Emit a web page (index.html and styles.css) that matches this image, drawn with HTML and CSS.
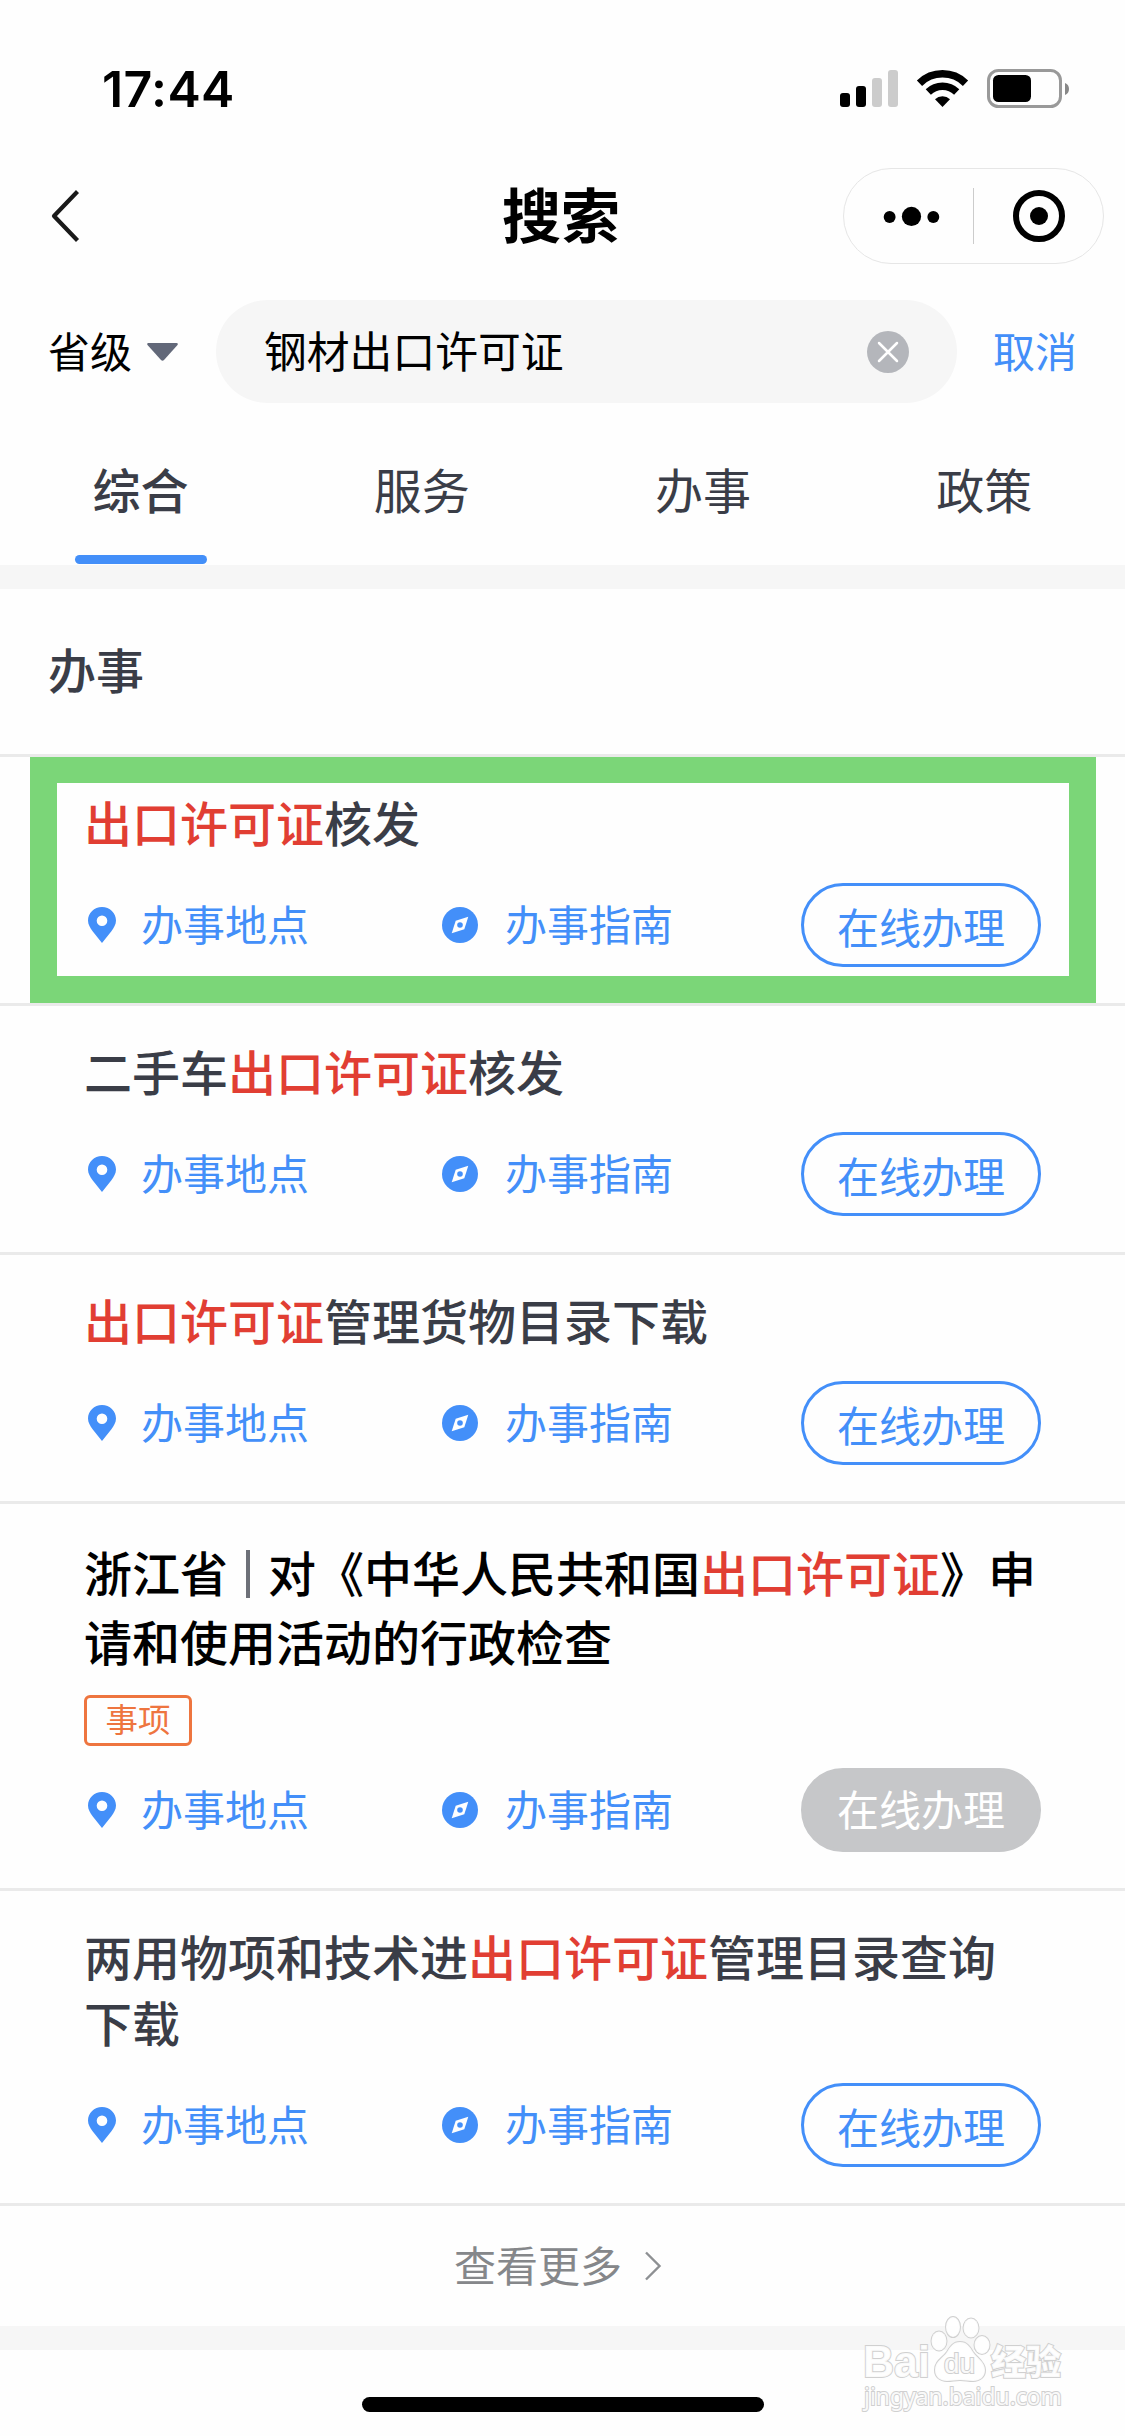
FILE: index.html
```html
<!DOCTYPE html>
<html lang="zh-CN">
<head>
<meta charset="utf-8">
<title>搜索</title>
<link rel="stylesheet" href="styles.css">
</head>
<body>
<svg width="0" height="0" class="defs">
  <symbol id="pin" viewBox="0 0 28 36"><path fill-rule="evenodd" d="M14 0C6.2 0 0 6 0 13.6 0 17.6 2.2 21 4.600 24.300L14 36l9.400-11.700C25.800 21 28 17.600 28 13.600 28 6 21.800 0 14 0zm0 8.400a5.300 5.300 0 1 1 0 10.600 5.300 5.300 0 0 1 0-10.600z"/></symbol>
  <symbol id="compass" viewBox="0 0 36 36"><circle cx="18" cy="18" r="18"/><path fill="#fefefe" d="M26.300 9.700 22.300 22.300 9.700 26.300 13.700 13.700z"/><circle cx="18" cy="18" r="2.800"/></symbol>
</svg>
<div class="screen">
  <header class="status">
    <span class="time">17:44</span>
    <svg class="status-icons" width="229" height="40" viewBox="0 0 229 40">
      <rect x="0" y="24" width="10" height="14" rx="3"/>
      <rect x="16" y="17" width="10" height="21" rx="3"/>
      <rect x="32" y="9" width="10" height="29" rx="3" fill="#ccc"/>
      <rect x="48" y="1" width="10" height="37" rx="3" fill="#ccc"/>
      <g fill="none" stroke="#000" stroke-width="7.500">
        <path d="M79.500 14.200A33 33 0 0 1 125.500 14.200"/>
        <path d="M88.300 23A20.500 20.500 0 0 1 116.700 23"/>
      </g>
      <path d="M95 30.200a10.800 10.800 0 0 1 15 0L102.500 38z"/>
      <rect x="148.500" y="1.500" width="72" height="36" rx="10" fill="none" stroke="#999" stroke-width="3"/>
      <rect x="153" y="6" width="38" height="27" rx="5.500"/>
      <path d="M225 14q4 1.500 4 6t-4 6z" fill="#888"/>
    </svg>
  </header>
  <nav class="nav">
    <svg class="back" width="30" height="52" viewBox="0 0 30 52"><path d="M26.500 1.500 3 26l23.500 24.500" fill="none" stroke="#1a1a1a" stroke-width="4.200" stroke-linejoin="round"/></svg>
    <h1>搜索</h1>
    <div class="capsule">
      <svg width="130" height="60" viewBox="0 0 130 60"><circle cx="46" cy="31" r="6"/><circle cx="68" cy="30.500" r="9.700"/><circle cx="90" cy="31" r="6"/></svg>
      <i></i>
      <svg width="129" height="60" viewBox="0 0 129 60"><circle cx="65" cy="30" r="23" fill="none" stroke="#000" stroke-width="6"/><circle cx="65" cy="30" r="9"/></svg>
    </div>
  </nav>
  <div class="search">
    <span class="level">省级</span>
    <svg class="caret" width="31" height="18" viewBox="0 0 31 18"><path d="M1.500 0h28q2 0 1 2L17 17q-1.500 1.500-3 0L.5 2q-1-2 1-2z" fill="#626879"/></svg>
    <div class="field">
      <span>钢材出口许可证</span>
      <svg width="42" height="42" viewBox="0 0 42 42"><circle cx="21" cy="21" r="21" fill="#b4b6bb"/><path d="M12 12 30 30M30 12 12 30" stroke="#fff" stroke-width="2.500" stroke-linecap="round"/></svg>
    </div>
    <span class="cancel">取消</span>
  </div>
  <div class="tabs">
    <div class="tab active"><span>综合</span></div>
    <div class="tab"><span>服务</span></div>
    <div class="tab"><span>办事</span></div>
    <div class="tab"><span>政策</span></div>
  </div>
  <h2>办事</h2>
  <section class="item marked">
    <h3><em>出口许可证</em>核发</h3>
    <div class="actions">
      <svg class="pin"><use href="#pin"/></svg><span class="place">办事地点</span>
      <svg class="compass"><use href="#compass"/></svg><span class="guide">办事指南</span>
      <span class="btn">在线办理</span>
    </div>
  </section>
  <section class="item">
    <h3>二手车<em>出口许可证</em>核发</h3>
    <div class="actions">
      <svg class="pin"><use href="#pin"/></svg><span class="place">办事地点</span>
      <svg class="compass"><use href="#compass"/></svg><span class="guide">办事指南</span>
      <span class="btn">在线办理</span>
    </div>
  </section>
  <section class="item">
    <h3><em>出口许可证</em>管理货物目录下载</h3>
    <div class="actions">
      <svg class="pin"><use href="#pin"/></svg><span class="place">办事地点</span>
      <svg class="compass"><use href="#compass"/></svg><span class="guide">办事指南</span>
      <span class="btn">在线办理</span>
    </div>
  </section>
  <section class="item region">
    <h3>浙江省<i class="bar"></i>对《中华人民共和国<em>出口许可证</em>》申<br>请和使用活动的行政检查</h3>
    <span class="tag">事项</span>
    <div class="actions">
      <svg class="pin"><use href="#pin"/></svg><span class="place">办事地点</span>
      <svg class="compass"><use href="#compass"/></svg><span class="guide">办事指南</span>
      <span class="btn off">在线办理</span>
    </div>
  </section>
  <section class="item two">
    <h3>两用物项和技术进<em>出口许可证</em>管理目录查询<br>下载</h3>
    <div class="actions">
      <svg class="pin"><use href="#pin"/></svg><span class="place">办事地点</span>
      <svg class="compass"><use href="#compass"/></svg><span class="guide">办事指南</span>
      <span class="btn">在线办理</span>
    </div>
  </section>
  <div class="more"><span>查看更多</span><svg width="18" height="30" viewBox="0 0 18 30"><path d="M2 1.500 15.500 15 2 28.500" fill="none" stroke="#8e9093" stroke-width="2.400"/></svg></div>
  <footer><div class="home"></div></footer>
  <svg class="watermark" width="212" height="120" viewBox="0 0 212 120">
    <g class="wm">
      <text class="latin" x="4" y="65" font-size="45" textLength="67" lengthAdjust="spacingAndGlyphs">Bai</text>
      <ellipse cx="80" cy="29" rx="7.500" ry="9.500"/>
      <ellipse cx="94" cy="15" rx="7" ry="10"/>
      <ellipse cx="112" cy="16" rx="7.500" ry="9.500"/>
      <ellipse cx="123" cy="33" rx="7.500" ry="9"/>
      <path d="M101 30c-7 0-10 5-13 10-4 6-12 9-12 18 0 7 5 11 12 11 5 0 8-1 13-1s8 1 13 1c7 0 12-4 12-11 0-8-8-12-12-18-3-5-6-10-13-10z"/>
      <text class="latin du" x="85" y="61" font-size="27" textLength="31" lengthAdjust="spacingAndGlyphs">du</text>
      <text class="cjk" x="132" y="63" font-size="35">经验</text>
      <text class="url" x="5" y="93" font-size="24" textLength="198" lengthAdjust="spacingAndGlyphs">jingyan.baidu.com</text>
    </g>
  </svg>
</div>
</body>
</html>
```

FILE: styles.css
```css
*, *::after { box-sizing: border-box; margin: 0; padding: 0; }
body { background: #fefefe; font-family: "Noto Sans CJK SC", sans-serif; color: #3a3d47; }
.defs { display: none; }
svg { display: block; flex: none; }
.screen { position: relative; width: 1125px; height: 2436px; overflow: hidden; display: flex; flex-direction: column; }
.screen > * { flex: none; }

.status { height: 168px; padding: 69px 56px 0 102px; display: flex; justify-content: space-between; align-items: flex-start; }
.time { font: 600 50px/40px Inter, sans-serif; letter-spacing: .4px; color: #000; }

.nav { height: 96px; display: grid; grid-template-columns: 282px 561px 261px; align-items: center; }
.back { margin-left: 51px; }
h1 { font-size: 59px; line-height: 84px; font-weight: 600; color: #000; text-align: center; padding: 0 3px 6px 0; }
.capsule { height: 96px; border: 1px solid #e6e6e6; border-radius: 48px; display: flex; align-items: center; }
.capsule svg { flex: 1; min-width: 0; }
.capsule i { width: 1px; height: 56px; background: #ccc; }

.search { margin-top: 36px; height: 103px; padding-left: 48px; display: flex; align-items: center; font-size: 42px; line-height: 60px; color: #000; }
.level { width: 99px; padding-bottom: 4px; }
.caret { margin-right: 38px; }
.field { width: 741px; height: 103px; border-radius: 52px; background: #f6f6f6; padding: 0 48px; display: flex; align-items: center; justify-content: space-between; }
.field span { padding-bottom: 5px; font-size: 42.800px; }
.cancel { margin-left: 36px; padding-bottom: 4px; color: #438ff9; }

.tabs { height: 186px; border-bottom: 24px solid #f6f6f6; display: grid; grid-template-columns: repeat(4, 1fr); font-size: 48px; }
.tab { display: flex; flex-direction: column; align-items: center; padding-top: 52px; line-height: 66px; }
.active { font-weight: 500; }
.active::after { content: ""; width: 132px; height: 9px; margin-top: 34px; border-radius: 5px; background: #438ff9; }

h2 { height: 168px; padding: 46px 48px 0; font-size: 48px; line-height: 66px; font-weight: 500; border-bottom: 3px solid #eaeaea; }

.item { position: relative; height: 249px; padding: 31px 84px 0; border-bottom: 3px solid #eaeaea; }
.marked::after { content: ""; position: absolute; left: 30px; top: 0; width: 1066px; height: 246px; border: solid #7bd678; border-width: 26px 27px 27px; }
h3 { font-size: 48px; line-height: 67px; font-weight: 500; white-space: nowrap; }
em { font-style: normal; color: #e13e33; }
.actions { margin-top: 28px; height: 84px; display: flex; align-items: center; font-size: 42px; line-height: 60px; color: #438ff9; fill: #438ff9; }
.pin { width: 28px; height: 36px; margin: 0 25px 0 4px; }
.place { width: 301px; padding-bottom: 5px; }
.compass { width: 36px; height: 36px; margin-right: 27px; }
.guide { width: 296px; padding-bottom: 5px; }
.btn { width: 240px; height: 84px; border: 3px solid #438ff9; border-radius: 42px; line-height: 79px; text-align: center; }
.off { background: #c6c7c9; border-color: #c6c7c9; color: #fff; line-height: 73px; }
.region { height: 387px; padding-top: 33px; }
.region h3 { color: #000; line-height: 69px; }
.bar { display: inline-block; width: 4px; height: 48px; margin: 0 18px; background: #6d7078; vertical-align: -6px; }
.tag { display: block; width: 108px; height: 51px; margin-top: 20px; border: 3px solid #ee753f; border-radius: 6px; color: #ee753f; font-size: 32.500px; line-height: 40px; text-align: center; }
.region .actions { margin-top: 22px; }
.two { height: 315px; padding-top: 31px; }
.two h3 { line-height: 66px; }
.two .actions { margin-top: 29px; }

.more { height: 120px; padding-left: 454px; display: flex; align-items: center; font-size: 42px; line-height: 60px; color: #85878a; }
.more span { width: 190px; padding-bottom: 5px; }
footer { border-top: 24px solid #f6f6f6; padding-top: 47px; }
.home { width: 402px; height: 15px; margin: 0 auto; border-radius: 8px; background: #000; }

.watermark { position: absolute; left: 859px; top: 2312px; overflow: visible; }
.wm { fill: #fff; fill-opacity: .9; stroke: #d0d0d0; stroke-width: 2px; paint-order: stroke; }
.latin { font-family: "Liberation Sans", sans-serif; font-weight: 700; }
.du { font-weight: 400; }
.cjk { font-family: "Noto Sans CJK SC", sans-serif; font-weight: 900; }
.url { font-family: "Noto Sans", sans-serif; }
```
